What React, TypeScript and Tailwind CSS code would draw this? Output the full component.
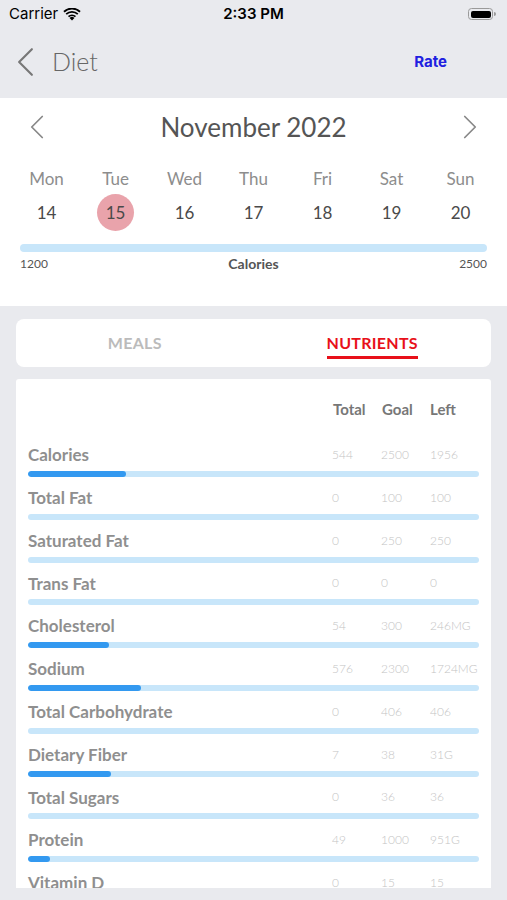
import React from 'react';

const days = [
    { name: 'Mon', date: 14 },
    { name: 'Tue', date: 15 },
    { name: 'Wed', date: 16 },
    { name: 'Thu', date: 17 },
    { name: 'Fri', date: 18 },
    { name: 'Sat', date: 19 },
    { name: 'Sun', date: 20 },
];

const nutrients = [
    { name: 'Calories', total: 544, goal: 2500, left: '1956' },
    { name: 'Total Fat', total: 0, goal: 100, left: '100' },
    { name: 'Saturated Fat', total: 0, goal: 250, left: '250' },
    { name: 'Trans Fat', total: 0, goal: 0, left: '0' },
    { name: 'Cholesterol', total: 54, goal: 300, left: '246MG' },
    { name: 'Sodium', total: 576, goal: 2300, left: '1724MG' },
    { name: 'Total Carbohydrate', total: 0, goal: 406, left: '406' },
    { name: 'Dietary Fiber', total: 7, goal: 38, left: '31G' },
    { name: 'Total Sugars', total: 0, goal: 36, left: '36' },
    { name: 'Protein', total: 49, goal: 1000, left: '951G' },
    { name: 'Vitamin D', total: 0, goal: 15, left: '15' },
];

function Chevron({ dir, className }: { dir: 'left' | 'right'; className?: string }) {
    return (
        <svg viewBox="0 0 16 28" className={className} fill="none" stroke="currentColor" strokeWidth="2" strokeLinecap="round" strokeLinejoin="round">
            {dir === 'left' ? <path d="M14 2 L2 14 L14 26" /> : <path d="M2 2 L14 14 L2 26" />}
        </svg>
    );
}

function StatusBar() {
    return (
        <div className="h-[28px] flex items-center justify-between px-[9px] text-[15px] text-black font-['Inter',sans-serif]">
            <div className="flex items-center gap-[5px] w-[120px]">
                <span>Carrier</span>
                <svg viewBox="0 0 20 15" className="w-[18px] h-[13px]" fill="black">
                    <path d="M10 14.5 L7.2 11.4 A4 4 0 0 1 12.8 11.4 Z" />
                    <path d="M5.3 9.3 A6.8 6.8 0 0 1 14.7 9.3 L13.3 10.8 A4.9 4.9 0 0 0 6.7 10.8 Z" />
                    <path d="M2.6 6.4 A10.6 10.6 0 0 1 17.4 6.4 L16 7.9 A8.6 8.6 0 0 0 4 7.9 Z" />
                    <path d="M0 3.6 A14.4 14.4 0 0 1 20 3.6 L18.6 5.1 A12.4 12.4 0 0 0 1.4 5.1 Z" />
                </svg>
            </div>
            <span className="font-semibold">2:33 PM</span>
            <div className="w-[120px] flex justify-end pr-[2px]">
                <div className="flex items-center">
                    <div className="w-[25px] h-[12px] rounded-[3.5px] border border-[#9a9a9a] p-[1.5px]">
                        <div className="w-full h-full bg-black rounded-[2px]" />
                    </div>
                    <div className="w-[1.5px] h-[4px] bg-[#9a9a9a] rounded-r-sm ml-[1px]" />
                </div>
            </div>
        </div>
    );
}

export default function App() {
    return (
        <div className="w-[507px] h-[900px] bg-[#e9eaee] overflow-hidden font-['Lato',sans-serif]">
            <StatusBar />

            {/* навигация */}
            <div className="h-[70px] flex items-center pl-[17px] pr-[60px]">
                <Chevron dir="left" className="w-[17px] h-[30px] text-[#777] -mt-[2px]" />
                <span className="ml-[18px] text-[25px] font-light text-[#666] leading-none -mt-[4px]">Diet</span>
                <span className="ml-auto text-[15px] font-bold text-[#2020e0] font-['Inter',sans-serif] -mt-[2px]">Rate</span>
            </div>

            {/* календарь */}
            <div className="bg-white h-[208px] pt-[14px]">
                <div className="flex items-center justify-between px-[30px] h-[30px]">
                    <Chevron dir="left" className="w-[14px] h-[26px] text-[#888]" />
                    <span className="text-[26px] text-[#555] leading-none">November 2022</span>
                    <Chevron dir="right" className="w-[14px] h-[26px] text-[#888]" />
                </div>
                <div className="grid grid-cols-7 px-[12px] mt-[26px]">
                    {days.map((d) => (
                        <div key={d.name} className="flex flex-col items-center">
                            <span className="text-[17px] text-[#8d8d8d] leading-[22px]">{d.name}</span>
                            <div className={`mt-[4px] w-[37px] h-[37px] rounded-full flex items-center justify-center text-[17px] text-[#4a4a4a] ${d.date === 15 ? 'bg-[#e9a3ab]' : ''}`}>
                                {d.date}
                            </div>
                        </div>
                    ))}
                </div>
                <div className="mx-[20px] mt-[13px] h-[8px] rounded-full bg-[#c8e6fa]" />
                <div className="mx-[20px] mt-[3px] flex justify-between items-center text-[12px] text-[#555] leading-[18px]">
                    <span>1200</span>
                    <span className="font-bold text-[14px]">Calories</span>
                    <span>2500</span>
                </div>
            </div>

            {/* вкладки */}
            <div className="mx-[16px] mt-[13px] h-[48px] bg-white rounded-lg grid grid-cols-2">
                <div className="flex items-center justify-center">
                    <span className="text-[16px] font-bold text-[#bbb] tracking-[0.3px]">MEALS</span>
                </div>
                <div className="flex items-center justify-center">
                    <span className="text-[16px] font-bold text-[#e8101a] tracking-[0.3px] border-b-[3px] border-[#e8101a] pt-[6px] pb-[3px] leading-[20px]">NUTRIENTS</span>
                </div>
            </div>

            {/* нутриенты */}
            <div className="mx-[16px] mt-[12px] h-[509px] bg-white rounded-t-[3px] overflow-hidden px-[12px]">
                <div className="flex items-center h-[20px] mt-[20px] mb-[26px] text-[15px] font-bold text-[#777]">
                    <div className="flex-1" />
                    <span className="w-[49px] pl-[1px]">Total</span>
                    <span className="w-[49px] pl-[1px]">Goal</span>
                    <span className="w-[49px]">Left</span>
                </div>
                {nutrients.map((n) => {
                    const pct = n.goal > 0 ? Math.min(100, (n.total / n.goal) * 100) : 0;
                    return (
                        <div key={n.name} className="h-[42.8px]">
                            <div className="flex items-center h-[20px]">
                                <span className="flex-1 text-[17px] font-bold text-[#8f8f8f]">{n.name}</span>
                                <span className="w-[49px] text-[12px] font-light text-[#c4c4c4]">{n.total}</span>
                                <span className="w-[49px] text-[12px] font-light text-[#c4c4c4]">{n.goal}</span>
                                <span className="w-[49px] text-[12px] font-light text-[#c4c4c4]">{n.left}</span>
                            </div>
                            <div className="mt-[6px] h-[6px] rounded-full bg-[#c8e6fa] overflow-hidden">
                                <div className="h-full bg-[#3399f0] rounded-full" style={{ width: `${pct}%` }} />
                            </div>
                        </div>
                    );
                })}
            </div>
        </div>
    );
}
